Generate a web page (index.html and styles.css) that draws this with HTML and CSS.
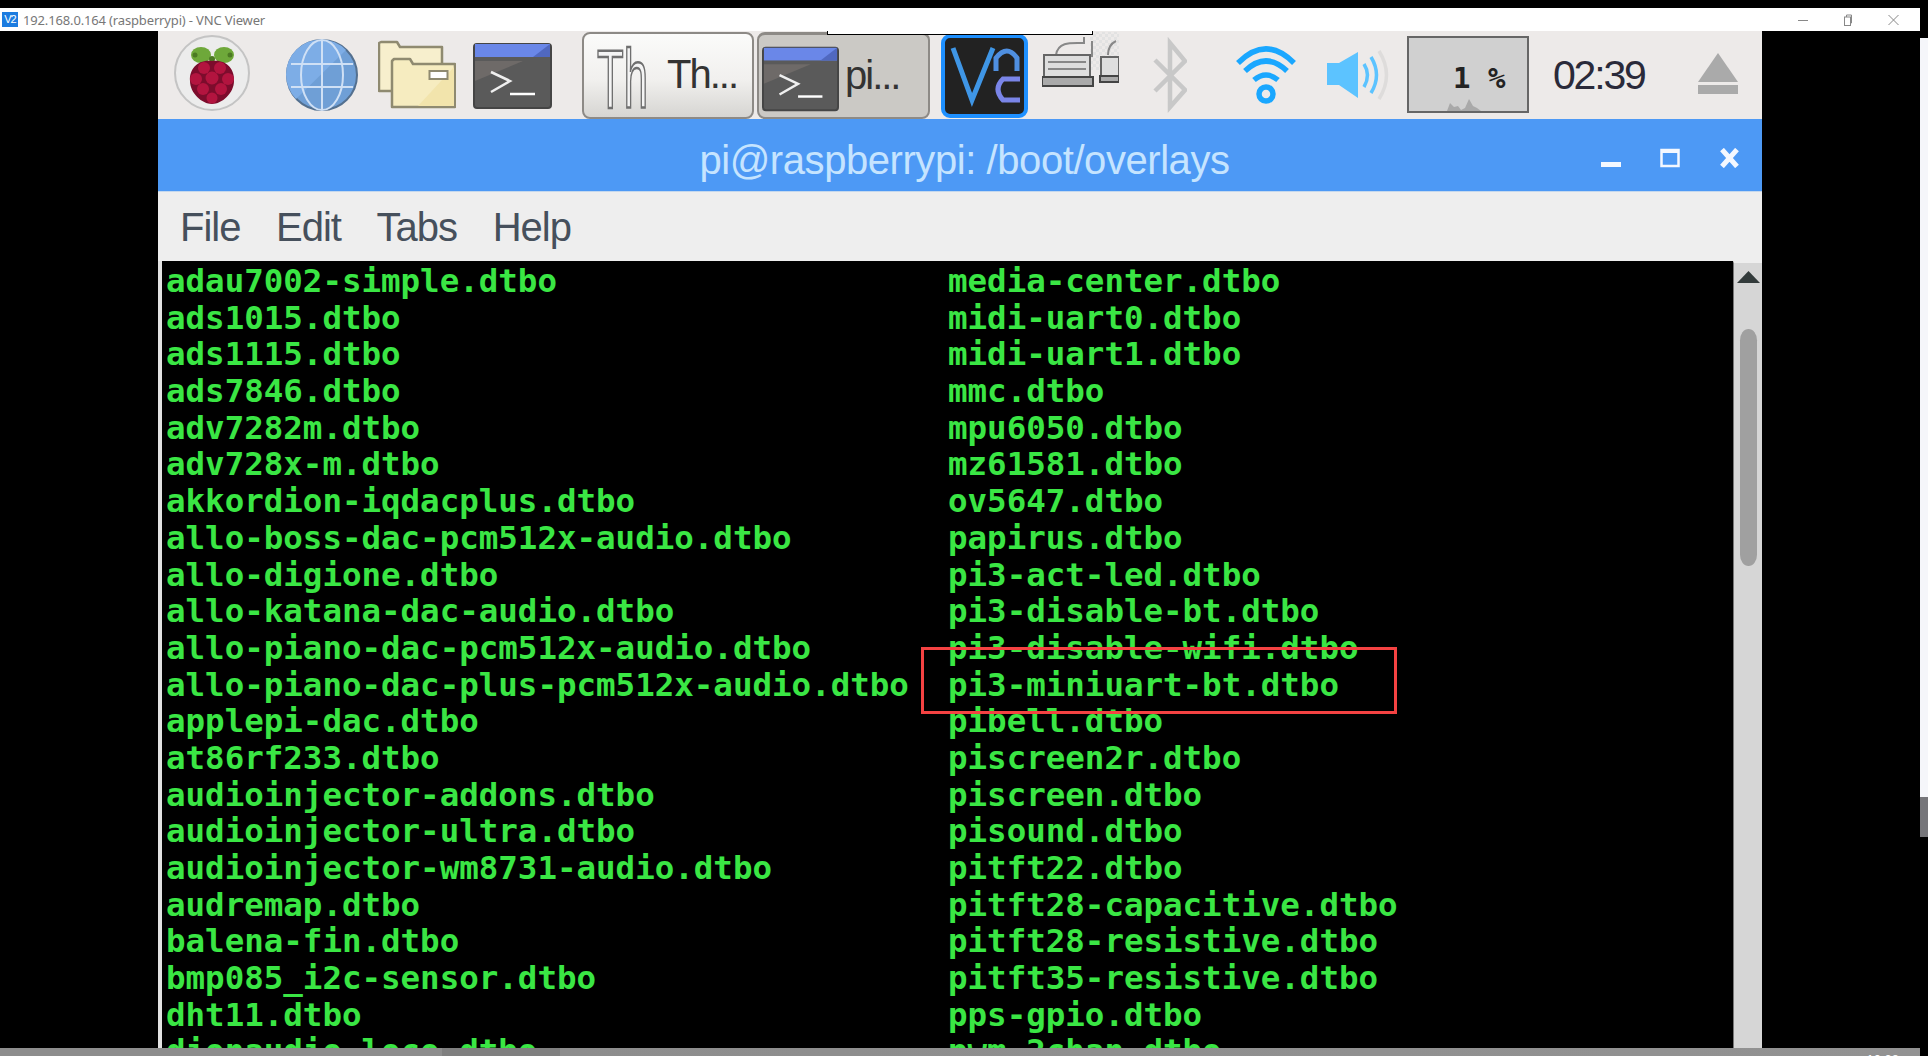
FILE: index.html
```html
<!DOCTYPE html>
<html lang="en">
<head>
<meta charset="utf-8">
<title>192.168.0.164 (raspberrypi) - VNC Viewer</title>
<link rel="stylesheet" href="styles.css">
</head>
<body>
<svg class="defs" width="0" height="0" aria-hidden="true">
  <symbol id="term" viewBox="0 0 79 88">
    <rect x="1" y="13" width="77" height="64" rx="3" fill="#5a5a5a" stroke="#454545" stroke-width="2"/>
    <path d="M2 50 L50 30 L2 30Z" fill="#6e6a68"/>
    <rect x="2" y="13" width="75" height="13" fill="#6a87e8"/>
    <path d="M60 26 L77 13 V26Z" fill="#5068c0"/>
    <polyline points="18,41 37,50 18,61" fill="none" stroke="#efefef" stroke-width="2.5"/>
    <line x1="37" y1="63" x2="62" y2="63" stroke="#fff" stroke-width="2.5"/>
  </symbol>
</svg>
<div class="screen">
  <div class="main">
    <div class="top-black"></div>
    <header class="caption">
      <span class="cap-logo">V2</span>
      <span class="cap-title">192.168.0.164 (raspberrypi) - VNC Viewer</span>
      <div class="cap-controls">
        <svg width="10" height="12" viewBox="0 0 10 12"><line x1="0" y1="6.5" x2="10" y2="6.5" stroke="#888" stroke-width="1"/></svg>
        <svg width="10" height="12" viewBox="0 0 10 12"><rect x="1.5" y="3" width="6" height="8.5" fill="none" stroke="#888"/><path d="M3.5 3V1H8.5V9H7.5" fill="none" stroke="#888"/></svg>
        <svg width="11" height="12" viewBox="0 0 11 12"><path d="M0.5 1L10.5 11M10.5 1L0.5 11" stroke="#888" stroke-width="1"/></svg>
      </div>
    </header>
    <div class="desktop">
      <div class="window">
        <nav class="taskbar">
          <span class="cover"></span>
          <svg class="i-rasp" width="76" height="88" viewBox="0 0 76 88">
            <circle cx="38" cy="42" r="37" fill="#ececec" stroke="#c4c4c4" stroke-width="2"/>
            <g fill="#6ea83a"><ellipse cx="27" cy="24" rx="10" ry="8"/><ellipse cx="50" cy="24" rx="10" ry="8"/></g>
            <g fill="#4c7a24"><circle cx="38" cy="28" r="3"/><circle cx="21" cy="24" r="2.5"/><circle cx="56" cy="24" r="2.5"/></g>
            <path d="M38 30 C52 28 61 38 60 50 C60 62 48 73 38 73 C28 73 16 62 16 50 C15 38 24 28 38 30Z" fill="#7c0c2c"/>
            <g fill="#b3143f"><circle cx="30" cy="37" r="6"/><circle cx="46" cy="37" r="6"/><circle cx="22" cy="48" r="6"/><circle cx="38" cy="47" r="6.5"/><circle cx="54" cy="48" r="6"/><circle cx="29" cy="58" r="6"/><circle cx="47" cy="58" r="6"/><circle cx="38" cy="67" r="5.5"/></g>
          </svg>
          <svg class="i-globe" width="72" height="88" viewBox="0 0 72 88">
            <circle cx="36" cy="44" r="35" fill="#6f9fd6" stroke="#54708f" stroke-width="2"/>
            <path d="M10 68 A35 35 0 0 1 60 19Z" fill="#7dade6"/>
            <g fill="none" stroke="#cfe0f5" stroke-width="2"><line x1="36" y1="9" x2="36" y2="79"/><ellipse cx="36" cy="44" rx="21" ry="35"/><line x1="5" y1="33" x2="67" y2="33"/><line x1="5" y1="56" x2="67" y2="56"/></g>
          </svg>
          <svg class="i-folder" width="78" height="88" viewBox="0 0 78 88">
            <g stroke="#8f8a70" stroke-width="2.5" stroke-linejoin="round">
              <path d="M1 60 V12 L3 11 H19 L22 16 H64 V60Z" fill="#f7efcd"/>
              <path d="M14 76 V30 L16 28 H32 L35 33 H77 V76Z" fill="#f6ecc0"/>
            </g>
            <path d="M40 75 L76 36 V75Z" fill="#f2e4ac"/>
            <rect x="51.5" y="40" width="18" height="8" fill="#fff" stroke="#8f8a70" stroke-width="2"/>
          </svg>
          <svg class="i-term" width="79" height="88"><use href="#term"/></svg>
          <div class="task task-light">
            <div class="th-icon"><span class="th-glyph">Th</span></div>
            <span class="task-label">Th...</span>
          </div>
          <div class="task task-pressed">
            <svg class="pi-icon" width="77" height="86" viewBox="0 0 79 88"><use href="#term" width="79" height="88"/></svg>
            <span class="task-label task-label-pi">pi...</span>
          </div>
          <svg class="i-vnc" width="87" height="88" viewBox="0 0 87 88">
            <rect x="2" y="5" width="83" height="80" rx="7" fill="#222" stroke="#1e90ff" stroke-width="4"/>
            <polyline points="12,17 31,69 52,17" fill="none" stroke="#3f96e6" stroke-width="5"/>
            <path d="M55 40 V27 Q66 13 76 27 V40" fill="none" stroke="#4f8fe0" stroke-width="5"/>
            <path d="M79 48 H62 Q52 58 62 69 H79" fill="none" stroke="#7a85e8" stroke-width="5"/>
          </svg>
          <svg class="i-print" width="77" height="88" viewBox="0 0 77 88">
            <defs><pattern id="dots" width="6" height="6" patternUnits="userSpaceOnUse"><rect width="3" height="3" fill="#e2e2e2"/><rect x="3" y="3" width="3" height="3" fill="#e2e2e2"/></pattern></defs>
            <rect x="48" y="1" width="36" height="38" fill="url(#dots)"/>
            <path d="M14 24 C16 10 30 12 42 12 V6 M50 10 V26" fill="none" stroke="#888" stroke-width="2"/>
            <rect x="2" y="24" width="46" height="24" fill="#dedede" stroke="#666" stroke-width="2"/>
            <g stroke="#888" stroke-width="2"><line x1="6" y1="31" x2="44" y2="31"/><line x1="6" y1="38" x2="44" y2="38"/></g>
            <rect x="0" y="46" width="51" height="9" fill="#aaa" stroke="#444" stroke-width="2"/>
            <path d="M66 24 C66 16 70 12 74 10" fill="none" stroke="#888" stroke-width="2"/>
            <rect x="59" y="26" width="18" height="20" fill="#dedede" stroke="#666" stroke-width="2"/>
            <rect x="58" y="45" width="19" height="6" fill="#aaa" stroke="#444" stroke-width="2"/>
          </svg>
          <svg class="i-bt" width="34" height="88" viewBox="0 0 34 88"><path d="M2 29 L32 59 L17 76 V12 L32 30 L2 60" fill="none" stroke="#c8c8c8" stroke-width="4.5"/></svg>
          <svg class="i-wifi" width="62" height="88" viewBox="0 0 62 88">
            <g fill="none" stroke="#1aa7ff" stroke-width="5.5"><path d="M3 32 Q31 4 59 32"/><path d="M10 40 Q31 20 52 40"/><path d="M19 49 Q31 39 43 49"/><circle cx="31" cy="63" r="7"/></g>
          </svg>
          <svg class="i-vol" width="63" height="88" viewBox="0 0 63 88">
            <polygon points="0,32 12,32 31,21 31,67 12,54 0,54" fill="#5cc3ff"/>
            <g fill="none" stroke-width="3.5"><path d="M37 33 Q44 44 37 56" stroke="#5cc3ff"/><path d="M44 26 Q55 44 44 62" stroke="#5cc3ff"/><path d="M52 20 Q67 44 52 68" stroke="#dedcdb"/></g>
          </svg>
          <div class="cpu">
            <span class="cpu-text">1 %</span>
            <svg class="cpu-graph" width="118" height="14" viewBox="0 0 118 14"><path d="M38 14 L41 6 L45 10 L49 9 L52 13 L56 11 L60 2 L64 9 L68 11 L72 14Z" fill="#a9a9a9"/></svg>
          </div>
          <span class="clock">02:39</span>
          <svg class="i-eject" width="40" height="88" viewBox="0 0 40 88"><polygon points="20,22 40,51 0,51" fill="#aaa"/><rect y="54" width="40" height="9" fill="#aaa"/></svg>
        </nav>
        <div class="titlebar">
          <span></span>
          <h1 class="title">pi@raspberrypi: /boot/overlays</h1>
          <div class="win-controls">
            <svg width="20" height="20" viewBox="0 0 20 20"><rect y="14" width="20" height="5" fill="#f4f8ff"/></svg>
            <svg width="20" height="20" viewBox="0 0 20 20"><rect x="1.5" y="2" width="17" height="16" fill="none" stroke="#f4f8ff" stroke-width="2.5"/><rect x="1" y="1" width="18" height="4" fill="#f4f8ff"/></svg>
            <svg width="21" height="20" viewBox="0 0 21 20"><path d="M3 1.5L18 18.5M18 1.5L3 18.5" stroke="#f4f8ff" stroke-width="5"/></svg>
          </div>
        </div>
        <div class="menubar">
          <span class="menu-item">File</span>
          <span class="menu-item">Edit</span>
          <span class="menu-item">Tabs</span>
          <span class="menu-item">Help</span>
        </div>
        <div class="term-wrap">
          <div class="terminal">
            <span>adau7002-simple.dtbo</span>
            <span>ads1015.dtbo</span>
            <span>ads1115.dtbo</span>
            <span>ads7846.dtbo</span>
            <span>adv7282m.dtbo</span>
            <span>adv728x-m.dtbo</span>
            <span>akkordion-iqdacplus.dtbo</span>
            <span>allo-boss-dac-pcm512x-audio.dtbo</span>
            <span>allo-digione.dtbo</span>
            <span>allo-katana-dac-audio.dtbo</span>
            <span>allo-piano-dac-pcm512x-audio.dtbo</span>
            <span>allo-piano-dac-plus-pcm512x-audio.dtbo</span>
            <span>applepi-dac.dtbo</span>
            <span>at86rf233.dtbo</span>
            <span>audioinjector-addons.dtbo</span>
            <span>audioinjector-ultra.dtbo</span>
            <span>audioinjector-wm8731-audio.dtbo</span>
            <span>audremap.dtbo</span>
            <span>balena-fin.dtbo</span>
            <span>bmp085_i2c-sensor.dtbo</span>
            <span>dht11.dtbo</span>
            <span>dionaudio-loco.dtbo</span>
            <span>media-center.dtbo</span>
            <span>midi-uart0.dtbo</span>
            <span>midi-uart1.dtbo</span>
            <span>mmc.dtbo</span>
            <span>mpu6050.dtbo</span>
            <span>mz61581.dtbo</span>
            <span>ov5647.dtbo</span>
            <span>papirus.dtbo</span>
            <span>pi3-act-led.dtbo</span>
            <span>pi3-disable-bt.dtbo</span>
            <span>pi3-disable-wifi.dtbo</span>
            <span>pi3-miniuart-bt.dtbo</span>
            <span>pibell.dtbo</span>
            <span>piscreen2r.dtbo</span>
            <span>piscreen.dtbo</span>
            <span>pisound.dtbo</span>
            <span>pitft22.dtbo</span>
            <span>pitft28-capacitive.dtbo</span>
            <span>pitft28-resistive.dtbo</span>
            <span>pitft35-resistive.dtbo</span>
            <span>pps-gpio.dtbo</span>
            <span>pwm-2chan.dtbo</span>
          </div>
          <div class="highlight"></div>
          <div class="scrollbar">
            <svg class="sb-arrow" width="23" height="12" viewBox="0 0 23 12"><polygon points="11.5,0 23,12 0,12" fill="#333b3b"/></svg>
            <div class="sb-thumb"></div>
          </div>
        </div>
      </div>
    </div>
    <footer class="bottom"><span class="bottom-clock">10:38</span></footer>
  </div>
  <aside class="edge">
    <div class="edge-light"></div>
    <div class="edge-thumb"></div>
  </aside>
</div>
</body>
</html>
```
FILE: styles.css
```css
* { box-sizing: border-box; }
html, body { margin: 0; padding: 0; background: #000; }
body { width: 1928px; height: 1056px; overflow: hidden; font-family: "Liberation Sans", Arial, sans-serif; }
.defs { position: absolute; }
svg { display: block; flex: none; }

.screen { display: flex; height: 1056px; }
.main { width: 1920px; display: flex; flex-direction: column; }
.top-black { height: 8px; background: #000; }

.caption { height: 23px; background: #fff; display: flex; align-items: center; padding: 0 21px 0 2px; }
.cap-logo { width: 16px; height: 15px; background: #1c7ce0; color: #fff; font-size: 11px; line-height: 15px; text-align: center; letter-spacing: -1px; }
.cap-title { margin-left: 5px; color: #777; font-family: "Noto Sans", sans-serif; font-size: 13px; letter-spacing: -0.15px; white-space: nowrap; }
.cap-controls { margin-left: auto; display: flex; gap: 35px; align-items: center; }

.desktop { flex: 1; min-height: 0; padding-left: 158px; background: #000; }
.window { width: 1604px; height: 100%; display: flex; flex-direction: column; }

.taskbar { position: relative; height: 88px; background: #edeae9; display: flex; }
.cover { position: absolute; left: 669px; top: 0; width: 266px; height: 4px; background: #fff; border: 1px solid #000; border-width: 0 1px 1px; }
.i-rasp { margin-left: 16px; }
.i-globe { margin-left: 36px; }
.i-folder { margin-left: 20px; }
.i-term { margin-left: 17px; }
.task { width: 172px; margin-top: 1px; border: 2px solid #8d8a86; border-radius: 8px; display: flex; }
.task-light { margin-left: 30px; background: linear-gradient(#fbfbfa, #f1f0ee 55%, #d6d5d2); padding-left: 13px; }
.task-pressed { margin-left: 3px; width: 173px; background: #cbc9c5; border-top-width: 3px; padding-left: 3px; }
.th-icon { width: 51px; padding-top: 3px; }
.th-glyph { display: inline-block; margin-right: -47px; font-size: 84px; line-height: 84px; color: #f4f4f4; -webkit-text-stroke: 2.5px #6f6f6f; transform: scaleX(0.52); transform-origin: left center; }
.task-label { align-self: center; margin: 0 0 2px 19px; font-size: 40px; letter-spacing: -2px; color: #333; white-space: nowrap; }
.task-label-pi { margin-left: 6px; }
.i-vnc { margin-left: 11px; }
.i-print { margin-left: 14px; }
.i-bt { margin-left: 34px; }
.i-wifi { margin-left: 48px; }
.i-vol { margin-left: 30px; }
.cpu { width: 122px; margin: 5px 0 6px 17px; background: #d0d0d0; border: 2px solid #666; display: flex; flex-direction: column; justify-content: flex-end; }
.cpu-text { font-family: "DejaVu Sans Mono", monospace; font-weight: 700; font-size: 29px; line-height: 30px; color: #222; padding-left: 44px; white-space: pre; margin-bottom: 4px; }
.clock { margin-left: 24px; width: 92px; align-self: center; font-size: 41px; letter-spacing: -2.2px; color: #2a2a3a; white-space: nowrap; }
.i-eject { margin-left: 53px; }

.titlebar { height: 73px; padding-top: 6px; background: #4d99f5; border-bottom: 1px solid #c4d8ee; display: grid; grid-template-columns: 1fr auto 1fr; align-items: center; }
.title { margin: 4px 0 0 9px; font-weight: 400; font-size: 40px; letter-spacing: -0.43px; color: #c5e4ff; white-space: nowrap; }
.win-controls { display: flex; justify-content: flex-end; gap: 39px; padding-right: 22px; }

.menubar { height: 69px; padding: 2px 0 0 22px; background: #eee; display: flex; align-items: center; gap: 35.6px; }
.menu-item { font-size: 40px; letter-spacing: -1px; color: #46505c; }

.term-wrap { position: relative; flex: 1; min-height: 0; display: flex; border-left: 4px solid #e2e2e2; }
.terminal { width: 1571px; height: 100%; overflow: hidden; background: #000; padding: 2px 0 0 4px; display: grid; grid-auto-flow: column; grid-template-rows: repeat(22, 36.7px); grid-template-columns: 782px 1fr; font-family: "DejaVu Sans Mono", monospace; font-weight: 700; font-size: 32.47px; line-height: 36.7px; color: #3ae644; white-space: pre; }
.highlight { position: absolute; left: 759px; top: 386px; width: 476px; height: 67px; border: 3px solid #f44242; }
.scrollbar { width: 29px; background: #d6d6d6; border-left: 1px solid #777; border-top: 2px solid #eee; padding: 8px 0 0 3px; }
.sb-arrow { margin-bottom: 46px; }
.sb-thumb { width: 17px; height: 237px; margin-left: 3px; background: #a0a0a0; border-radius: 9px / 12px; }

.bottom { height: 8px; overflow: hidden; background: linear-gradient(90deg, #8d8d8d 0, #8d8d8d 442px, #7f7f7f 442px, #7f7f7f 560px, #8d8d8d 560px, #929292 100%); display: flex; justify-content: flex-end; padding: 5px 21px 0 0; }
.bottom-clock { font-size: 13px; line-height: 13px; color: #fff; }

.edge { width: 8px; padding-top: 38px; background: #000; }
.edge-light { height: 759px; background: #f5f6fa; }
.edge-thumb { height: 40px; background: #76767a; }
```
